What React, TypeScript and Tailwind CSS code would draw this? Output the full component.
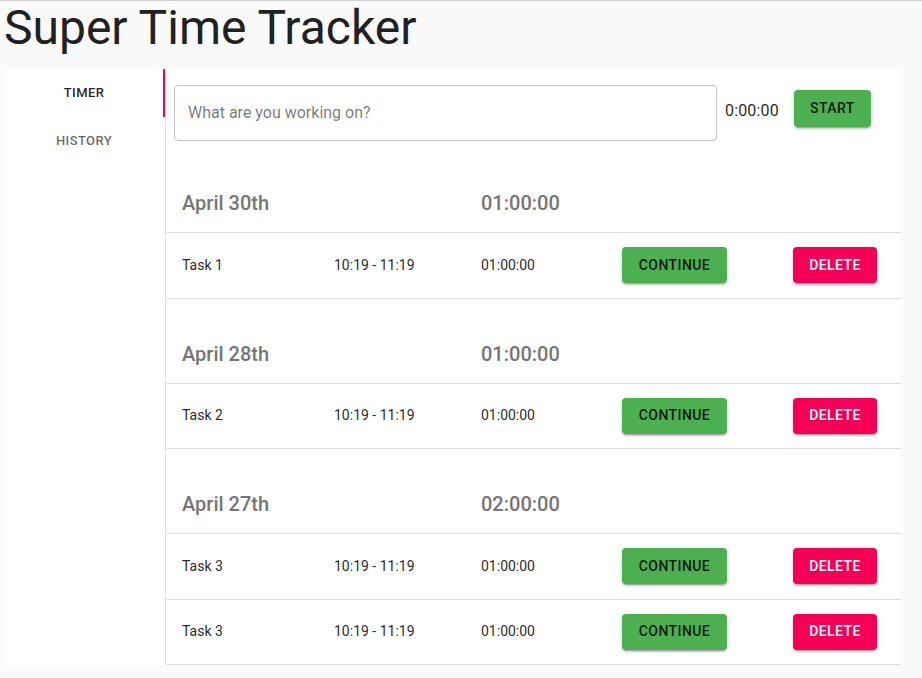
import React from 'react';

const days = [
  {
    date: 'April 30th',
    total: '01:00:00',
    tasks: [{ name: 'Task 1', range: '10:19 - 11:19', duration: '01:00:00' }],
  },
  {
    date: 'April 28th',
    total: '01:00:00',
    tasks: [{ name: 'Task 2', range: '10:19 - 11:19', duration: '01:00:00' }],
  },
  {
    date: 'April 27th',
    total: '02:00:00',
    tasks: [
      { name: 'Task 3', range: '10:19 - 11:19', duration: '01:00:00' },
      { name: 'Task 3', range: '10:19 - 11:19', duration: '01:00:00' },
    ],
  },
];

const btnShadow =
  'shadow-[0_3px_1px_-2px_rgba(0,0,0,0.2),0_2px_2px_0_rgba(0,0,0,0.14),0_1px_5px_0_rgba(0,0,0,0.12)]';

export default function App() {
  return (
    <div
      className="min-h-[678px] bg-[#fafafa] border-t border-[#d0d0d0] text-[rgba(0,0,0,0.87)]"
      style={{ fontFamily: 'Roboto, "Liberation Sans", sans-serif' }}
    >
      <h1 className="text-[48px] leading-[53px] font-normal pl-1 text-[#212121]">Super Time Tracker</h1>

      <div className="mt-[15px] ml-[5px] w-[896px] bg-white flex">
        {/* tabs */}
        <div className="w-[160px] shrink-0 flex flex-col">
          <div className="h-[48px] flex items-center justify-center border-r-2 border-[#f50057] text-[13px] font-medium tracking-[0.03em] text-[rgba(0,0,0,0.87)]">
            TIMER
          </div>
          <div className="h-[48px] flex items-center justify-center text-[13px] font-medium tracking-[0.03em] text-[rgba(0,0,0,0.6)] pr-[2px]">
            HISTORY
          </div>
        </div>

        {/* content */}
        <div className="flex-1 border-l border-[#e0e0e0]">
          <div className="h-[79px] pt-[16px] pl-[8px] flex items-start">
            <div className="w-[543px] h-[56px] border border-[#c4c4c4] rounded-[4px] flex items-center px-[13px]">
              <span className="text-[16px] text-[rgba(0,0,0,0.54)]">What are you working on?</span>
            </div>
            <span className="ml-[8px] mt-[14px] text-[16px] leading-[24px] tracking-[0.01em] text-[rgba(0,0,0,0.87)]">0:00:00</span>
            <button
              className={`ml-[15px] mt-[5px] w-[77px] h-[37px] rounded-[4px] bg-[#4caf50] text-[14px] font-medium tracking-[0.03em] text-[rgba(0,0,0,0.87)] ${btnShadow}`}
            >
              START
            </button>
          </div>

          {days.map((day, i) => (
            <div key={i}>
              <div className="h-[85px] grid grid-cols-[152px_147px_141px_171px_1fr] items-end pb-[17px] border-b border-[#e0e0e0]">
                <span className="pl-[16px] text-[20px] leading-[24px] font-medium text-[#757575]">{day.date}</span>
                <span />
                <span className="pl-[16px] text-[20px] leading-[24px] font-medium text-[#757575]">{day.total}</span>
              </div>
              {day.tasks.map((t, j) => (
                <div
                  key={j}
                  className="h-[65.5px] grid grid-cols-[152px_147px_141px_171px_1fr] items-center border-b border-[#e0e0e0] text-[14px]"
                >
                  <span className="pl-[16px]">{t.name}</span>
                  <span className="pl-[16px]">{t.range}</span>
                  <span className="pl-[16px]">{t.duration}</span>
                  <div className="pl-[16px]">
                    <button
                      className={`w-[105px] h-[36px] rounded-[4px] bg-[#4caf50] text-[14px] font-medium tracking-[0.03em] text-[rgba(0,0,0,0.87)] ${btnShadow}`}
                    >
                      CONTINUE
                    </button>
                  </div>
                  <div className="pl-[16px]">
                    <button
                      className={`w-[84px] h-[36px] rounded-[4px] bg-[#f50057] text-[14px] font-medium tracking-[0.03em] text-white ${btnShadow}`}
                    >
                      DELETE
                    </button>
                  </div>
                </div>
              ))}
            </div>
          ))}
        </div>
      </div>
    </div>
  );
}
